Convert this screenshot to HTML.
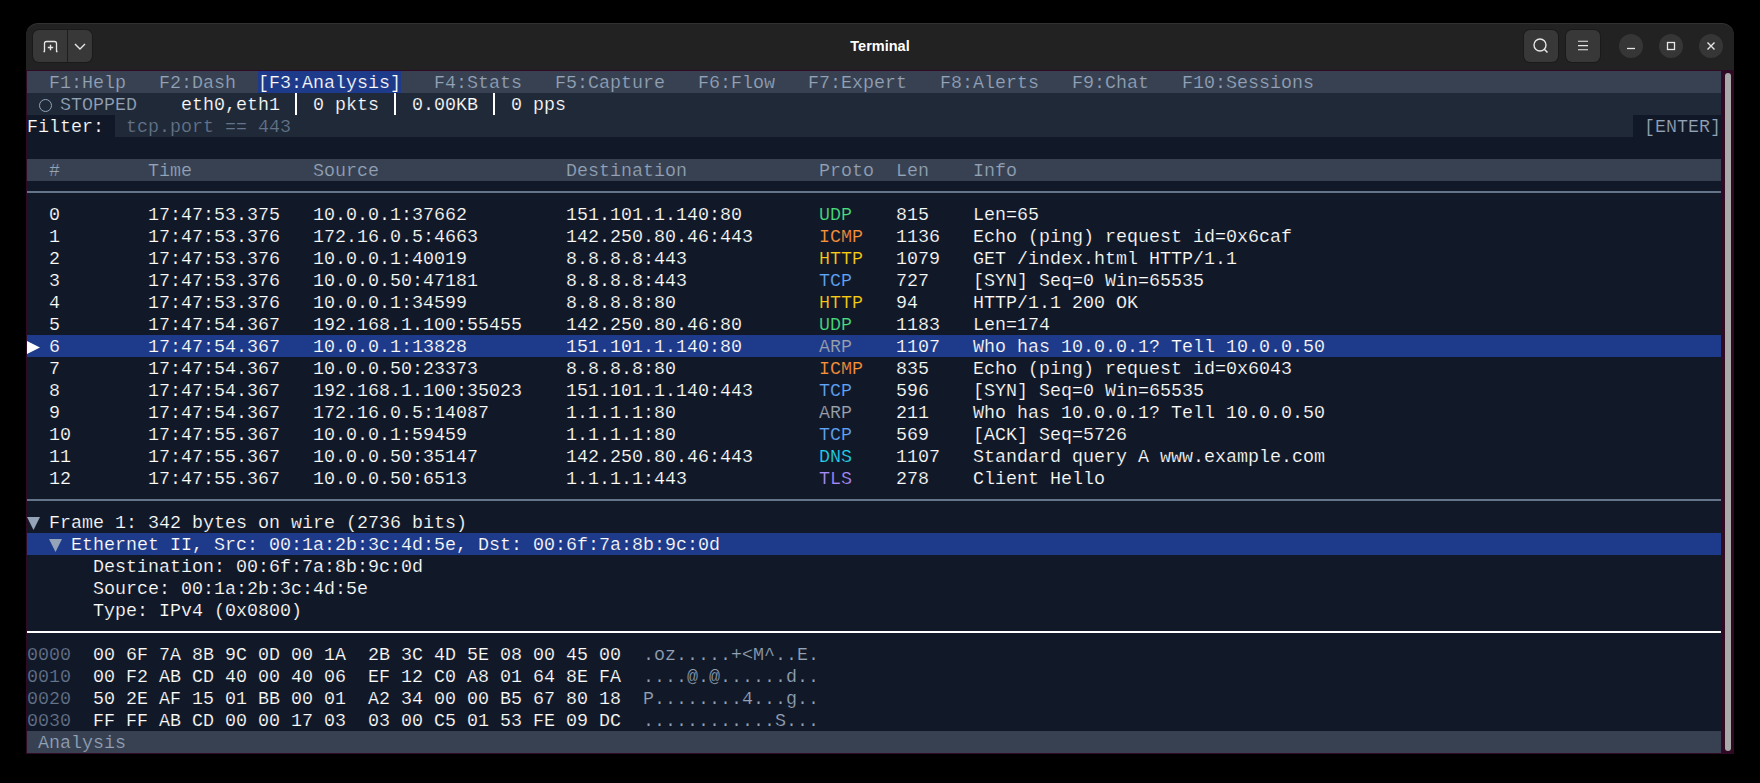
<!DOCTYPE html>
<html><head><meta charset="utf-8"><style>
html,body{margin:0;padding:0;}
body{width:1760px;height:783px;background:#000;position:relative;overflow:hidden;}
.t{position:absolute;font-family:"Liberation Mono",monospace;font-size:18.3303px;line-height:22px;height:22px;white-space:pre;}
.btn{position:absolute;background:#383838;border-radius:6px;box-shadow:0 0 0 1px rgba(0,0,0,0.22);}
.circ{position:absolute;width:24px;height:24px;border-radius:50%;background:#363636;}
</style></head><body>
<div style="position:absolute;left:26px;top:23px;width:1708px;height:731px;background:#222222;border-radius:12px 12px 0 0;box-shadow:inset 0 1px 0 rgba(255,255,255,0.07);"></div>
<div style="position:absolute;left:840px;top:23px;width:80px;height:47px;font-family:'Liberation Sans',sans-serif;font-weight:bold;font-size:14.5px;color:#ffffff;text-align:center;line-height:47px;">Terminal</div>

<div class="btn" style="left:33px;top:30px;width:59px;height:32px;"></div>
<div style="position:absolute;left:67px;top:30px;width:1px;height:32px;background:#1e1e1e"></div>
<svg style="position:absolute;left:41px;top:34px" width="22" height="22" viewBox="0 0 22 22">
  <path d="M3.5 17.5 V9.5 Q3.5 7.5 5.5 7.5 H13.5 Q15.5 7.5 15.5 9.5 V17.5" fill="none" stroke="#e6e6e6" stroke-width="1.3"/>
  <path d="M2.5 17.5 H4 M15 17.5 H16.5" stroke="#e6e6e6" stroke-width="1.3"/>
  <path d="M9.5 10.8 V16.2 M6.8 13.5 H12.2" stroke="#e6e6e6" stroke-width="1.4"/>
</svg>
<svg style="position:absolute;left:72px;top:38px" width="16" height="16" viewBox="0 0 16 16">
  <path d="M3 6 L8 11 L13 6" fill="none" stroke="#e6e6e6" stroke-width="1.4"/>
</svg>
<div class="btn" style="left:1524px;top:30px;width:34px;height:32px;"></div>
<div class="btn" style="left:1566px;top:30px;width:34px;height:32px;"></div>
<svg style="position:absolute;left:1531px;top:36px" width="20" height="20" viewBox="0 0 20 20">
  <circle cx="9" cy="9" r="6" fill="none" stroke="#e6e6e6" stroke-width="1.4"/>
  <path d="M13.3 13.3 L16.5 16.5" stroke="#e6e6e6" stroke-width="1.5"/>
</svg>
<svg style="position:absolute;left:1573px;top:36px" width="20" height="20" viewBox="0 0 20 20">
  <path d="M5 5.2 H15 M5 9.6 H15 M5 13.8 H15" stroke="#e6e6e6" stroke-width="1.1"/>
</svg>
<div class="circ" style="left:1619px;top:34px"></div>
<div class="circ" style="left:1659px;top:34px"></div>
<div class="circ" style="left:1699px;top:34px"></div>
<svg style="position:absolute;left:1621px;top:36px" width="20" height="20" viewBox="0 0 20 20">
  <path d="M6 12.5 H14" stroke="#e6e6e6" stroke-width="1.3"/>
</svg>
<svg style="position:absolute;left:1661px;top:36px" width="20" height="20" viewBox="0 0 20 20">
  <rect x="6.5" y="6.5" width="7" height="7" fill="none" stroke="#e6e6e6" stroke-width="1.3"/>
</svg>
<svg style="position:absolute;left:1701px;top:36px" width="20" height="20" viewBox="0 0 20 20">
  <path d="M6.5 6.5 L13.5 13.5 M13.5 6.5 L6.5 13.5" stroke="#e6e6e6" stroke-width="1.4"/>
</svg>

<div style="position:absolute;left:26px;top:70px;width:1708px;height:684px;background:#300a24;"></div>
<div style="position:absolute;left:27px;top:71px;width:1694px;height:682px;background:#111827;"></div>
<div style="position:absolute;left:1725px;top:73px;width:6px;height:678px;background:#a9a9a9;border-radius:3px;"></div>
<div style="position:absolute;left:27px;top:71px;width:1694px;height:22px;background:#374151;"></div>
<div style="position:absolute;left:27px;top:93px;width:1694px;height:22px;background:#1f2937;"></div>
<div style="position:absolute;left:115px;top:115px;width:1518px;height:22px;background:#1f2937;"></div>
<div style="position:absolute;left:27px;top:159px;width:1694px;height:22px;background:#374151;"></div>
<div style="position:absolute;left:27px;top:335px;width:1694px;height:22px;background:#1e3a8a;"></div>
<div style="position:absolute;left:27px;top:533px;width:1694px;height:22px;background:#1e3a8a;"></div>
<div style="position:absolute;left:27px;top:731px;width:1694px;height:22px;background:#374151;"></div>
<div style="position:absolute;left:258px;top:71px;width:143px;height:22px;background:#1e3a8a;"></div>
<div class="t" style="left:49px;top:73px;color:#94a3b8;-webkit-text-stroke:0.2px #374151">F1:Help</div>
<div class="t" style="left:159px;top:73px;color:#94a3b8;-webkit-text-stroke:0.2px #374151">F2:Dash</div>
<div class="t" style="left:434px;top:73px;color:#94a3b8;-webkit-text-stroke:0.2px #374151">F4:Stats</div>
<div class="t" style="left:555px;top:73px;color:#94a3b8;-webkit-text-stroke:0.2px #374151">F5:Capture</div>
<div class="t" style="left:698px;top:73px;color:#94a3b8;-webkit-text-stroke:0.2px #374151">F6:Flow</div>
<div class="t" style="left:808px;top:73px;color:#94a3b8;-webkit-text-stroke:0.2px #374151">F7:Expert</div>
<div class="t" style="left:940px;top:73px;color:#94a3b8;-webkit-text-stroke:0.2px #374151">F8:Alerts</div>
<div class="t" style="left:1072px;top:73px;color:#94a3b8;-webkit-text-stroke:0.2px #374151">F9:Chat</div>
<div class="t" style="left:1182px;top:73px;color:#94a3b8;-webkit-text-stroke:0.2px #374151">F10:Sessions</div>
<div class="t" style="left:258px;top:73px;color:#ffffff;-webkit-text-stroke:0.2px #1e3a8a">[F3:Analysis]</div>
<div class="t" style="left:60px;top:95px;color:#94a3b8;-webkit-text-stroke:0.2px #1f2937">STOPPED</div>
<div class="t" style="left:181px;top:95px;color:#ffffff;-webkit-text-stroke:0.2px #1f2937">eth0,eth1</div>
<div class="t" style="left:313px;top:95px;color:#ffffff;-webkit-text-stroke:0.2px #1f2937">0 pkts</div>
<div class="t" style="left:412px;top:95px;color:#ffffff;-webkit-text-stroke:0.2px #1f2937">0.00KB</div>
<div class="t" style="left:511px;top:95px;color:#ffffff;-webkit-text-stroke:0.2px #1f2937">0 pps</div>
<div style="position:absolute;left:295px;top:93px;width:2px;height:22px;background:#ffffff;"></div>
<div style="position:absolute;left:394px;top:93px;width:2px;height:22px;background:#ffffff;"></div>
<div style="position:absolute;left:493px;top:93px;width:2px;height:22px;background:#ffffff;"></div>
<div style="position:absolute;left:39px;top:99px;width:11px;height:11px;border:1.3px solid #94a3b8;border-radius:50%"></div>
<div class="t" style="left:27px;top:117px;color:#ffffff;-webkit-text-stroke:0.2px #111827">Filter:</div>
<div class="t" style="left:126px;top:117px;color:#64748b;-webkit-text-stroke:0.2px #1f2937">tcp.port == 443</div>
<div class="t" style="left:1644px;top:117px;color:#94a3b8;-webkit-text-stroke:0.2px #111827">[ENTER]</div>
<div class="t" style="left:49px;top:161px;color:#94a3b8;-webkit-text-stroke:0.2px #374151">#</div>
<div class="t" style="left:148px;top:161px;color:#94a3b8;-webkit-text-stroke:0.2px #374151">Time</div>
<div class="t" style="left:313px;top:161px;color:#94a3b8;-webkit-text-stroke:0.2px #374151">Source</div>
<div class="t" style="left:566px;top:161px;color:#94a3b8;-webkit-text-stroke:0.2px #374151">Destination</div>
<div class="t" style="left:819px;top:161px;color:#94a3b8;-webkit-text-stroke:0.2px #374151">Proto</div>
<div class="t" style="left:896px;top:161px;color:#94a3b8;-webkit-text-stroke:0.2px #374151">Len</div>
<div class="t" style="left:973px;top:161px;color:#94a3b8;-webkit-text-stroke:0.2px #374151">Info</div>
<div style="position:absolute;left:27px;top:191px;width:1694px;height:2px;background:#64748b;"></div>
<div class="t" style="left:49px;top:205px;color:#ffffff;-webkit-text-stroke:0.2px #111827">0</div>
<div class="t" style="left:148px;top:205px;color:#ffffff;-webkit-text-stroke:0.2px #111827">17:47:53.375</div>
<div class="t" style="left:313px;top:205px;color:#ffffff;-webkit-text-stroke:0.2px #111827">10.0.0.1:37662</div>
<div class="t" style="left:566px;top:205px;color:#ffffff;-webkit-text-stroke:0.2px #111827">151.101.1.140:80</div>
<div class="t" style="left:896px;top:205px;color:#ffffff;-webkit-text-stroke:0.2px #111827">815</div>
<div class="t" style="left:973px;top:205px;color:#ffffff;-webkit-text-stroke:0.2px #111827">Len=65</div>
<div class="t" style="left:819px;top:205px;color:#4ade80;-webkit-text-stroke:0.2px #111827">UDP</div>
<div class="t" style="left:49px;top:227px;color:#ffffff;-webkit-text-stroke:0.2px #111827">1</div>
<div class="t" style="left:148px;top:227px;color:#ffffff;-webkit-text-stroke:0.2px #111827">17:47:53.376</div>
<div class="t" style="left:313px;top:227px;color:#ffffff;-webkit-text-stroke:0.2px #111827">172.16.0.5:4663</div>
<div class="t" style="left:566px;top:227px;color:#ffffff;-webkit-text-stroke:0.2px #111827">142.250.80.46:443</div>
<div class="t" style="left:896px;top:227px;color:#ffffff;-webkit-text-stroke:0.2px #111827">1136</div>
<div class="t" style="left:973px;top:227px;color:#ffffff;-webkit-text-stroke:0.2px #111827">Echo (ping) request id=0x6caf</div>
<div class="t" style="left:819px;top:227px;color:#fb923c;-webkit-text-stroke:0.2px #111827">ICMP</div>
<div class="t" style="left:49px;top:249px;color:#ffffff;-webkit-text-stroke:0.2px #111827">2</div>
<div class="t" style="left:148px;top:249px;color:#ffffff;-webkit-text-stroke:0.2px #111827">17:47:53.376</div>
<div class="t" style="left:313px;top:249px;color:#ffffff;-webkit-text-stroke:0.2px #111827">10.0.0.1:40019</div>
<div class="t" style="left:566px;top:249px;color:#ffffff;-webkit-text-stroke:0.2px #111827">8.8.8.8:443</div>
<div class="t" style="left:896px;top:249px;color:#ffffff;-webkit-text-stroke:0.2px #111827">1079</div>
<div class="t" style="left:973px;top:249px;color:#ffffff;-webkit-text-stroke:0.2px #111827">GET /index.html HTTP/1.1</div>
<div class="t" style="left:819px;top:249px;color:#facc15;-webkit-text-stroke:0.2px #111827">HTTP</div>
<div class="t" style="left:49px;top:271px;color:#ffffff;-webkit-text-stroke:0.2px #111827">3</div>
<div class="t" style="left:148px;top:271px;color:#ffffff;-webkit-text-stroke:0.2px #111827">17:47:53.376</div>
<div class="t" style="left:313px;top:271px;color:#ffffff;-webkit-text-stroke:0.2px #111827">10.0.0.50:47181</div>
<div class="t" style="left:566px;top:271px;color:#ffffff;-webkit-text-stroke:0.2px #111827">8.8.8.8:443</div>
<div class="t" style="left:896px;top:271px;color:#ffffff;-webkit-text-stroke:0.2px #111827">727</div>
<div class="t" style="left:973px;top:271px;color:#ffffff;-webkit-text-stroke:0.2px #111827">[SYN] Seq=0 Win=65535</div>
<div class="t" style="left:819px;top:271px;color:#60a5fa;-webkit-text-stroke:0.2px #111827">TCP</div>
<div class="t" style="left:49px;top:293px;color:#ffffff;-webkit-text-stroke:0.2px #111827">4</div>
<div class="t" style="left:148px;top:293px;color:#ffffff;-webkit-text-stroke:0.2px #111827">17:47:53.376</div>
<div class="t" style="left:313px;top:293px;color:#ffffff;-webkit-text-stroke:0.2px #111827">10.0.0.1:34599</div>
<div class="t" style="left:566px;top:293px;color:#ffffff;-webkit-text-stroke:0.2px #111827">8.8.8.8:80</div>
<div class="t" style="left:896px;top:293px;color:#ffffff;-webkit-text-stroke:0.2px #111827">94</div>
<div class="t" style="left:973px;top:293px;color:#ffffff;-webkit-text-stroke:0.2px #111827">HTTP/1.1 200 OK</div>
<div class="t" style="left:819px;top:293px;color:#facc15;-webkit-text-stroke:0.2px #111827">HTTP</div>
<div class="t" style="left:49px;top:315px;color:#ffffff;-webkit-text-stroke:0.2px #111827">5</div>
<div class="t" style="left:148px;top:315px;color:#ffffff;-webkit-text-stroke:0.2px #111827">17:47:54.367</div>
<div class="t" style="left:313px;top:315px;color:#ffffff;-webkit-text-stroke:0.2px #111827">192.168.1.100:55455</div>
<div class="t" style="left:566px;top:315px;color:#ffffff;-webkit-text-stroke:0.2px #111827">142.250.80.46:80</div>
<div class="t" style="left:896px;top:315px;color:#ffffff;-webkit-text-stroke:0.2px #111827">1183</div>
<div class="t" style="left:973px;top:315px;color:#ffffff;-webkit-text-stroke:0.2px #111827">Len=174</div>
<div class="t" style="left:819px;top:315px;color:#4ade80;-webkit-text-stroke:0.2px #111827">UDP</div>
<div class="t" style="left:49px;top:337px;color:#ffffff;-webkit-text-stroke:0.2px #1e3a8a">6</div>
<div class="t" style="left:148px;top:337px;color:#ffffff;-webkit-text-stroke:0.2px #1e3a8a">17:47:54.367</div>
<div class="t" style="left:313px;top:337px;color:#ffffff;-webkit-text-stroke:0.2px #1e3a8a">10.0.0.1:13828</div>
<div class="t" style="left:566px;top:337px;color:#ffffff;-webkit-text-stroke:0.2px #1e3a8a">151.101.1.140:80</div>
<div class="t" style="left:896px;top:337px;color:#ffffff;-webkit-text-stroke:0.2px #1e3a8a">1107</div>
<div class="t" style="left:973px;top:337px;color:#ffffff;-webkit-text-stroke:0.2px #1e3a8a">Who has 10.0.0.1? Tell 10.0.0.50</div>
<div class="t" style="left:819px;top:337px;color:#9ca3af;-webkit-text-stroke:0.2px #1e3a8a">ARP</div>
<div class="t" style="left:49px;top:359px;color:#ffffff;-webkit-text-stroke:0.2px #111827">7</div>
<div class="t" style="left:148px;top:359px;color:#ffffff;-webkit-text-stroke:0.2px #111827">17:47:54.367</div>
<div class="t" style="left:313px;top:359px;color:#ffffff;-webkit-text-stroke:0.2px #111827">10.0.0.50:23373</div>
<div class="t" style="left:566px;top:359px;color:#ffffff;-webkit-text-stroke:0.2px #111827">8.8.8.8:80</div>
<div class="t" style="left:896px;top:359px;color:#ffffff;-webkit-text-stroke:0.2px #111827">835</div>
<div class="t" style="left:973px;top:359px;color:#ffffff;-webkit-text-stroke:0.2px #111827">Echo (ping) request id=0x6043</div>
<div class="t" style="left:819px;top:359px;color:#fb923c;-webkit-text-stroke:0.2px #111827">ICMP</div>
<div class="t" style="left:49px;top:381px;color:#ffffff;-webkit-text-stroke:0.2px #111827">8</div>
<div class="t" style="left:148px;top:381px;color:#ffffff;-webkit-text-stroke:0.2px #111827">17:47:54.367</div>
<div class="t" style="left:313px;top:381px;color:#ffffff;-webkit-text-stroke:0.2px #111827">192.168.1.100:35023</div>
<div class="t" style="left:566px;top:381px;color:#ffffff;-webkit-text-stroke:0.2px #111827">151.101.1.140:443</div>
<div class="t" style="left:896px;top:381px;color:#ffffff;-webkit-text-stroke:0.2px #111827">596</div>
<div class="t" style="left:973px;top:381px;color:#ffffff;-webkit-text-stroke:0.2px #111827">[SYN] Seq=0 Win=65535</div>
<div class="t" style="left:819px;top:381px;color:#60a5fa;-webkit-text-stroke:0.2px #111827">TCP</div>
<div class="t" style="left:49px;top:403px;color:#ffffff;-webkit-text-stroke:0.2px #111827">9</div>
<div class="t" style="left:148px;top:403px;color:#ffffff;-webkit-text-stroke:0.2px #111827">17:47:54.367</div>
<div class="t" style="left:313px;top:403px;color:#ffffff;-webkit-text-stroke:0.2px #111827">172.16.0.5:14087</div>
<div class="t" style="left:566px;top:403px;color:#ffffff;-webkit-text-stroke:0.2px #111827">1.1.1.1:80</div>
<div class="t" style="left:896px;top:403px;color:#ffffff;-webkit-text-stroke:0.2px #111827">211</div>
<div class="t" style="left:973px;top:403px;color:#ffffff;-webkit-text-stroke:0.2px #111827">Who has 10.0.0.1? Tell 10.0.0.50</div>
<div class="t" style="left:819px;top:403px;color:#9ca3af;-webkit-text-stroke:0.2px #111827">ARP</div>
<div class="t" style="left:49px;top:425px;color:#ffffff;-webkit-text-stroke:0.2px #111827">10</div>
<div class="t" style="left:148px;top:425px;color:#ffffff;-webkit-text-stroke:0.2px #111827">17:47:55.367</div>
<div class="t" style="left:313px;top:425px;color:#ffffff;-webkit-text-stroke:0.2px #111827">10.0.0.1:59459</div>
<div class="t" style="left:566px;top:425px;color:#ffffff;-webkit-text-stroke:0.2px #111827">1.1.1.1:80</div>
<div class="t" style="left:896px;top:425px;color:#ffffff;-webkit-text-stroke:0.2px #111827">569</div>
<div class="t" style="left:973px;top:425px;color:#ffffff;-webkit-text-stroke:0.2px #111827">[ACK] Seq=5726</div>
<div class="t" style="left:819px;top:425px;color:#60a5fa;-webkit-text-stroke:0.2px #111827">TCP</div>
<div class="t" style="left:49px;top:447px;color:#ffffff;-webkit-text-stroke:0.2px #111827">11</div>
<div class="t" style="left:148px;top:447px;color:#ffffff;-webkit-text-stroke:0.2px #111827">17:47:55.367</div>
<div class="t" style="left:313px;top:447px;color:#ffffff;-webkit-text-stroke:0.2px #111827">10.0.0.50:35147</div>
<div class="t" style="left:566px;top:447px;color:#ffffff;-webkit-text-stroke:0.2px #111827">142.250.80.46:443</div>
<div class="t" style="left:896px;top:447px;color:#ffffff;-webkit-text-stroke:0.2px #111827">1107</div>
<div class="t" style="left:973px;top:447px;color:#ffffff;-webkit-text-stroke:0.2px #111827">Standard query A www.example.com</div>
<div class="t" style="left:819px;top:447px;color:#22d3ee;-webkit-text-stroke:0.2px #111827">DNS</div>
<div class="t" style="left:49px;top:469px;color:#ffffff;-webkit-text-stroke:0.2px #111827">12</div>
<div class="t" style="left:148px;top:469px;color:#ffffff;-webkit-text-stroke:0.2px #111827">17:47:55.367</div>
<div class="t" style="left:313px;top:469px;color:#ffffff;-webkit-text-stroke:0.2px #111827">10.0.0.50:6513</div>
<div class="t" style="left:566px;top:469px;color:#ffffff;-webkit-text-stroke:0.2px #111827">1.1.1.1:443</div>
<div class="t" style="left:896px;top:469px;color:#ffffff;-webkit-text-stroke:0.2px #111827">278</div>
<div class="t" style="left:973px;top:469px;color:#ffffff;-webkit-text-stroke:0.2px #111827">Client Hello</div>
<div class="t" style="left:819px;top:469px;color:#a78bfa;-webkit-text-stroke:0.2px #111827">TLS</div>
<svg style="position:absolute;left:27px;top:341px" width="14" height="14"><polygon points="0,0 13,6.5 0,13" fill="#ffffff"/></svg>
<div style="position:absolute;left:27px;top:499px;width:1694px;height:2px;background:#64748b;"></div>
<div class="t" style="left:49px;top:513px;color:#ffffff;-webkit-text-stroke:0.2px #111827">Frame 1: 342 bytes on wire (2736 bits)</div>
<svg style="position:absolute;left:27px;top:517px" width="14" height="14"><polygon points="0,0 13,0 6.5,13" fill="#94a3b8"/></svg>
<div class="t" style="left:71px;top:535px;color:#ffffff;-webkit-text-stroke:0.2px #1e3a8a">Ethernet II, Src: 00:1a:2b:3c:4d:5e, Dst: 00:6f:7a:8b:9c:0d</div>
<svg style="position:absolute;left:49px;top:539px" width="14" height="14"><polygon points="0,0 13,0 6.5,13" fill="#94a3b8"/></svg>
<div class="t" style="left:93px;top:557px;color:#ffffff;-webkit-text-stroke:0.2px #111827">Destination: 00:6f:7a:8b:9c:0d</div>
<div class="t" style="left:93px;top:579px;color:#ffffff;-webkit-text-stroke:0.2px #111827">Source: 00:1a:2b:3c:4d:5e</div>
<div class="t" style="left:93px;top:601px;color:#ffffff;-webkit-text-stroke:0.2px #111827">Type: IPv4 (0x0800)</div>
<div style="position:absolute;left:27px;top:631px;width:1694px;height:2px;background:#ffffff;"></div>
<div class="t" style="left:27px;top:645px;color:#64748b;-webkit-text-stroke:0.2px #111827">0000</div>
<div class="t" style="left:93px;top:645px;color:#ffffff;-webkit-text-stroke:0.2px #111827">00 6F 7A 8B 9C 0D 00 1A</div>
<div class="t" style="left:368px;top:645px;color:#ffffff;-webkit-text-stroke:0.2px #111827">2B 3C 4D 5E 08 00 45 00</div>
<div class="t" style="left:643px;top:645px;color:#94a3b8;-webkit-text-stroke:0.2px #111827">.oz.....+&lt;M^..E.</div>
<div class="t" style="left:27px;top:667px;color:#64748b;-webkit-text-stroke:0.2px #111827">0010</div>
<div class="t" style="left:93px;top:667px;color:#ffffff;-webkit-text-stroke:0.2px #111827">00 F2 AB CD 40 00 40 06</div>
<div class="t" style="left:368px;top:667px;color:#ffffff;-webkit-text-stroke:0.2px #111827">EF 12 C0 A8 01 64 8E FA</div>
<div class="t" style="left:643px;top:667px;color:#94a3b8;-webkit-text-stroke:0.2px #111827">....@.@......d..</div>
<div class="t" style="left:27px;top:689px;color:#64748b;-webkit-text-stroke:0.2px #111827">0020</div>
<div class="t" style="left:93px;top:689px;color:#ffffff;-webkit-text-stroke:0.2px #111827">50 2E AF 15 01 BB 00 01</div>
<div class="t" style="left:368px;top:689px;color:#ffffff;-webkit-text-stroke:0.2px #111827">A2 34 00 00 B5 67 80 18</div>
<div class="t" style="left:643px;top:689px;color:#94a3b8;-webkit-text-stroke:0.2px #111827">P........4...g..</div>
<div class="t" style="left:27px;top:711px;color:#64748b;-webkit-text-stroke:0.2px #111827">0030</div>
<div class="t" style="left:93px;top:711px;color:#ffffff;-webkit-text-stroke:0.2px #111827">FF FF AB CD 00 00 17 03</div>
<div class="t" style="left:368px;top:711px;color:#ffffff;-webkit-text-stroke:0.2px #111827">03 00 C5 01 53 FE 09 DC</div>
<div class="t" style="left:643px;top:711px;color:#94a3b8;-webkit-text-stroke:0.2px #111827">............S...</div>
<div class="t" style="left:38px;top:733px;color:#94a3b8;-webkit-text-stroke:0.2px #374151">Analysis</div>
</body></html>
